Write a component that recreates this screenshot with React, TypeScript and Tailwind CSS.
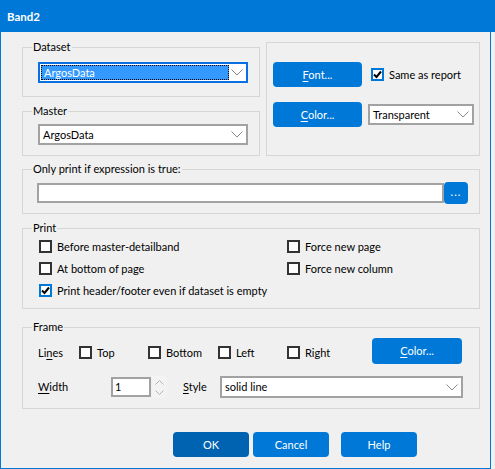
import React from "react";

const FONT = "font-['Lato','Noto_Sans',sans-serif]";

function Chevron() {
  return (
    <svg width="12" height="7" viewBox="0 0 12 7" className="shrink-0">
      <path d="M0.5 0.5 L6 6 L11.5 0.5" fill="none" stroke="#8a8a8a" strokeWidth="1" />
    </svg>
  );
}

function Group({
  label,
  className,
  children,
}: {
  label?: string;
  className: string;
  children?: React.ReactNode;
}) {
  return (
    <div className={`relative border border-[#d6d6d6] ${className}`}>
      {label && (
        <span className="absolute left-[9px] top-[-9px] bg-[#f0f0f0] px-[1px] leading-[16px] whitespace-nowrap">
          {label}
        </span>
      )}
      {children}
    </div>
  );
}

function Combo({ value, className }: { value: string; className: string }) {
  return (
    <div className={`flex items-center border-2 border-[#a2a2a2] bg-white ${className}`}>
      <span className="flex-1 pl-[3px] leading-[16px] whitespace-nowrap">{value}</span>
      <span className="mr-[3px] flex items-center">
        <Chevron />
      </span>
    </div>
  );
}

function FocusedCombo({ value, className }: { value: string; className: string }) {
  return (
    <div className={`flex items-center border-2 border-[#0a6fe0] bg-white ${className}`}>
      <span className="ml-[1px] flex h-[15px] w-[188px] items-center border border-dotted border-black bg-[#3399ff] pl-[2px] text-white leading-[13px] whitespace-nowrap">
        {value}
      </span>
      <span className="ml-auto mr-[3px] flex items-center">
        <Chevron />
      </span>
    </div>
  );
}

function Check({ checked }: { checked?: boolean }) {
  return (
    <span
      className={`flex h-[13px] w-[13px] shrink-0 items-center justify-center border-2 bg-white ${
        checked ? "border-[#0078d7]" : "border-[#333333]"
      }`}
    >
      {checked && (
        <svg width="9" height="9" viewBox="0 0 9 9">
          <path d="M1 4.5 L3.5 7 L8 1.5" fill="none" stroke="#000" strokeWidth="2" />
        </svg>
      )}
    </span>
  );
}

function CheckItem({ label, checked, className }: { label: string; checked?: boolean; className?: string }) {
  return (
    <div className={`flex h-[13px] items-center gap-[5px] ${className ?? ""}`}>
      <Check checked={checked} />
      <span className="leading-[16px] whitespace-nowrap">{label}</span>
    </div>
  );
}

function Btn({
  children,
  className,
}: {
  children: React.ReactNode;
  className: string;
}) {
  return (
    <div
      className={`flex items-center justify-center rounded-[4px] text-white leading-[16px] whitespace-nowrap ${className}`}
    >
      {children}
    </div>
  );
}

export default function App() {
  return (
    <div className={`h-[469px] w-[495px] overflow-hidden bg-[#f0f0f0] text-[11px] text-black ${FONT}`}>
      <div className="flex h-[32px] w-full items-center bg-[#0078d7] pl-[7px] pt-[1px] text-[11.5px] font-bold text-white">
        Band2
      </div>
      <div className="flex h-[437px] w-[491px] flex-col border-x border-b border-[#0078d7] pl-[21px] pt-[10px]">
        {/* top row */}
        <div className="flex items-start gap-[6px]">
          <div className="mt-[5px] flex w-[238px] flex-col gap-[14px]">
            <Group label="Dataset" className="h-[50px] pl-[15px] pt-[14px]">
              <FocusedCombo value="ArgosData" className="h-[21px] w-[210px]" />
            </Group>
            <Group label="Master" className="h-[45px] pl-[15px] pt-[12px]">
              <Combo value="ArgosData" className="h-[21px] w-[210px]" />
            </Group>
          </div>
          <Group className="flex h-[114px] w-[214px] flex-col pl-[6px] pt-[19px]">
            <div className="flex items-center">
              <Btn className="h-[25px] w-[89px] bg-[#0078d7]">
                <span>
                  <span className="underline underline-offset-2">F</span>ont...
                </span>
              </Btn>
              <div className="ml-[9px] flex items-center gap-[5px]">
                <Check checked />
                <span className="leading-[16px]">Same as report</span>
              </div>
            </div>
            <div className="mt-[15px] flex items-center gap-[6px]">
              <Btn className="h-[25px] w-[89px] bg-[#0078d7]">
                <span>
                  <span className="underline underline-offset-2">C</span>olor...
                </span>
              </Btn>
              <Combo value="Transparent" className="h-[21px] w-[106px]" />
            </div>
          </Group>
        </div>

        {/* expression */}
        <Group label="Only print if expression is true:" className="mt-[13px] h-[45px] w-[458px] pl-[14px] pt-[12px]">
          <div className="flex items-center">
            <div className="h-[20px] w-[407px] border-2 border-[#a2a2a2] bg-white" />
            <Btn className="h-[22px] w-[24px] bg-[#0078d7] pb-[2px] tracking-[1px]">...</Btn>
          </div>
        </Group>

        {/* print */}
        <Group label="Print" className="mt-[14px] flex h-[81px] w-[458px] pl-[16px] pt-[11px]">
          <div className="flex w-[248px] flex-col gap-[9px]">
            <CheckItem label="Before master-detailband" />
            <CheckItem label="At bottom of page" />
            <CheckItem label="Print header/footer even if dataset is empty" checked />
          </div>
          <div className="flex flex-col gap-[9px]">
            <CheckItem label="Force new page" />
            <CheckItem label="Force new column" />
          </div>
        </Group>

        {/* frame */}
        <Group label="Frame" className="mt-[18px] flex h-[82px] w-[458px] flex-col pl-[15px] pt-[10px]">
          <div className="flex h-[26px] items-start">
            <div className="mt-[8px] flex h-[13px] items-center">
              <span className="w-[41px] leading-[16px]">
                Li<span className="underline underline-offset-2">n</span>es
              </span>
              <CheckItem label="Top" className="w-[69px]" />
              <CheckItem label="Bottom" className="w-[70px]" />
              <CheckItem label="Left" className="w-[69px]" />
              <CheckItem label="Right" className="w-[85px]" />
            </div>
            <Btn className="h-[26px] w-[90px] bg-[#0078d7]">
              <span>
                <span className="underline underline-offset-2">C</span>olor...
              </span>
            </Btn>
          </div>
          <div className="mt-[12px] flex h-[22px] items-center">
            <span className="w-[73px] leading-[16px]">
              <span className="underline underline-offset-2">W</span>idth
            </span>
            <div className="flex h-[20px] w-[40px] items-center border-2 border-[#a2a2a2] bg-white pl-[2px] leading-[16px]">
              1
            </div>
            <div className="ml-[1px] flex h-[22px] w-[15px] flex-col items-center justify-center gap-[5px] bg-[#f3f3f3]">
              <svg width="9" height="5" viewBox="0 0 9 5">
                <path d="M0.5 4.5 L4.5 0.5 L8.5 4.5" fill="none" stroke="#b5b5b5" strokeWidth="1" />
              </svg>
              <svg width="9" height="5" viewBox="0 0 9 5">
                <path d="M0.5 0.5 L4.5 4.5 L8.5 0.5" fill="none" stroke="#b5b5b5" strokeWidth="1" />
              </svg>
            </div>
            <span className="ml-[16px] w-[37px] leading-[16px]">
              <span className="underline underline-offset-2">S</span>tyle
            </span>
            <Combo value="solid line" className="h-[22px] w-[243px]" />
          </div>
        </Group>

        {/* buttons */}
        <div className="mt-[23px] flex items-center pl-[151px]">
          <Btn className="h-[25px] w-[76px] bg-[#0063b1]">OK</Btn>
          <Btn className="ml-[4px] h-[25px] w-[76px] bg-[#0078d7]">Cancel</Btn>
          <Btn className="ml-[12px] h-[25px] w-[76px] bg-[#0078d7]">Help</Btn>
        </div>
      </div>
    </div>
  );
}
